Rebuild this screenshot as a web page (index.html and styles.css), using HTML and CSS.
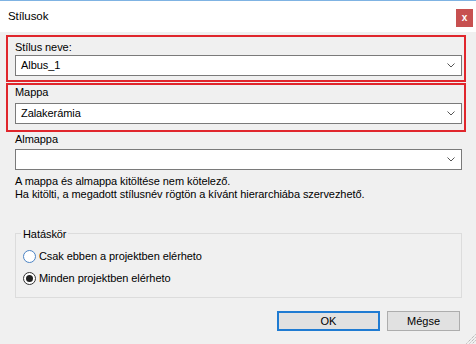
FILE: index.html
```html
<!DOCTYPE html>
<html>
<head>
    <meta charset="utf-8">
    <title>Stílusok</title>
    <link rel="stylesheet" href="styles.css">
</head>
<body>
    <div class="window">
        <div class="titlebar">
            <span class="title">Stílusok</span>
            <span class="close">x</span>
        </div>

        <div class="content">
            <div class="marked first">
                <label class="field-label">Stílus neve:</label>
                <div class="combo">
                    <span class="combo-text">Albus_1</span>
                    <svg class="chevron" width="8" height="5" viewBox="0 0 8 5"><polyline points="0.5,0.5 4,4 7.5,0.5" fill="none" stroke="#555" stroke-width="1"/></svg>
                </div>
            </div>

            <div class="marked second">
                <label class="field-label">Mappa</label>
                <div class="combo">
                    <span class="combo-text">Zalakerámia</span>
                    <svg class="chevron" width="8" height="5" viewBox="0 0 8 5"><polyline points="0.5,0.5 4,4 7.5,0.5" fill="none" stroke="#555" stroke-width="1"/></svg>
                </div>
            </div>

            <div class="plain">
                <label class="field-label">Almappa</label>
                <div class="combo">
                    <span class="combo-text"></span>
                    <svg class="chevron" width="8" height="5" viewBox="0 0 8 5"><polyline points="0.5,0.5 4,4 7.5,0.5" fill="none" stroke="#555" stroke-width="1"/></svg>
                </div>
                <p class="hint">A mappa és almappa kitöltése nem kötelező.<br>Ha kitölti, a megadott stílusnév rögtön a kívánt hierarchiába szervezhető.</p>
            </div>

            <div class="group">
                <span class="group-title">Hatáskör</span>
                <div class="radio-row">
                    <span class="radio hover"></span>
                    <span>Csak ebben a projektben elérheto</span>
                </div>
                <div class="radio-row">
                    <span class="radio checked"><span class="dot"></span></span>
                    <span>Minden projektben elérheto</span>
                </div>
            </div>

            <div class="buttons">
                <button class="btn default">OK</button>
                <button class="btn cancel">Mégse</button>
            </div>
        </div>

        <svg class="grip" width="11" height="11" viewBox="0 0 11 11">
            <line x1="10.5" y1="1.5" x2="1.5" y2="10.5" stroke="#a0a0a0" stroke-width="1" stroke-dasharray="1 1"/>
            <line x1="10.5" y1="4.5" x2="4.5" y2="10.5" stroke="#a0a0a0" stroke-width="1" stroke-dasharray="1 1"/>
            <line x1="10.5" y1="7.5" x2="7.5" y2="10.5" stroke="#a0a0a0" stroke-width="1" stroke-dasharray="1 1"/>
        </svg>
    </div>
</body>
</html>
```

FILE: styles.css
```css
/* Dialog base */
* {
    box-sizing: border-box;
}

body {
    margin: 0;
    background: #f0f0f0;
    font-family: "Liberation Sans", Arial, sans-serif;
    font-size: 11px;
    letter-spacing: -0.07px;
    color: #000;
}

.window {
    position: relative;
    width: 476px;
    height: 344px;
    overflow: hidden;
    background: #f0f0f0;
}

/* Title bar */
.titlebar {
    display: flex;
    align-items: flex-start;
    height: 32px;
    border-top: 1px solid #7fb3e3;
    background: #ffffff;
    padding-left: 8px;
}

.title {
    margin-top: 8px;
    font-size: 11.5px;
    line-height: 15px;
}

.close {
    margin: 8px 3px 0 auto;
    width: 17px;
    height: 18px;
    background: #c75050;
    color: #fff;
    font-weight: bold;
    font-size: 10px;
    line-height: 17px;
    text-align: center;
}

/* Content */
.content {
    padding: 0 10px 0 6px;
}

.marked {
    border: 2px solid #e0262c;
}

.marked.first {
    margin-top: 3px;
    padding: 3px 2px 4px 7px;
}

.marked.second {
    margin-top: 1px;
    padding: 0 2px 6px 7px;
}

.marked.second .combo {
    margin-top: 3px;
}

.field-label {
    display: block;
    line-height: 15px;
}

.combo {
    display: flex;
    align-items: center;
    height: 21px;
    border: 1px solid #7a7a7a;
    background: #fff;
    padding-left: 5px;
}

.combo-text {
    flex: 1;
    line-height: 15px;
}

.chevron {
    margin-right: 6px;
}

.plain {
    padding: 0 4px 0 9px;
}

.plain .combo {
    margin-top: 2px;
}

.hint {
    margin: 5px 0 0 0;
    line-height: 13px;
}

/* Group box */
.group {
    margin: 32px 4px 0 9px;
    border: 1px solid #dcdcdc;
    padding: 0 0 8px 7px;
}

.group-title {
    display: block;
    width: max-content;
    margin: -6px 0 0 -2px;
    padding: 0 2px;
    background: #f0f0f0;
    line-height: 13px;
}

.group-title + .radio-row {
    margin-top: 4px;
}

.radio-row {
    display: flex;
    align-items: center;
    gap: 3px;
    height: 22px;
}

.radio {
    display: flex;
    align-items: center;
    justify-content: center;
    width: 13px;
    height: 13px;
    border-radius: 50%;
    border: 1px solid #333;
    background: #fff;
}

.radio.hover {
    border-color: #4b83c4;
}

.dot {
    width: 7px;
    height: 7px;
    border-radius: 50%;
    background: #222;
}

/* Buttons */
.buttons {
    display: flex;
    justify-content: flex-end;
    gap: 7px;
    margin-top: 13px;
    padding-right: 6px;
}

.btn {
    height: 20px;
    background: #e1e1e1;
    font-family: "Liberation Sans", Arial, sans-serif;
    font-size: 11px;
    color: #000;
    padding: 0;
}

.btn.default {
    width: 103px;
    border: 2px solid #1f7bd2;
}

.btn.cancel {
    width: 73px;
    border: 1px solid #adadad;
}

/* Resize grip in the corner */
.grip {
    position: absolute;
    right: 0;
    bottom: 0;
}
```
